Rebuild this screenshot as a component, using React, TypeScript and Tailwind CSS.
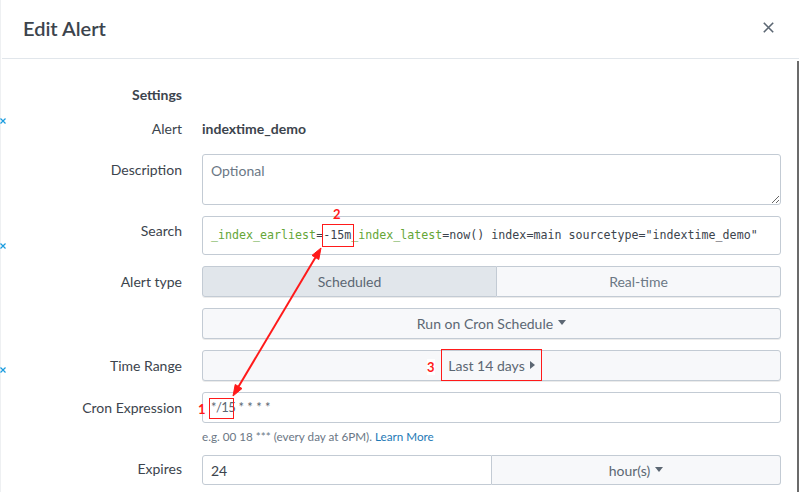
import React from "react";

function Caret() {
  return (
    <svg width="8" height="5" viewBox="0 0 8 5" className="inline-block ml-[5px] mb-[2px]">
      <path d="M0 0 L8 0 L4 5 Z" fill="#5c6773" />
    </svg>
  );
}

function CaretRight() {
  return (
    <svg width="5" height="8" viewBox="0 0 5 8" className="inline-block ml-[5px] mb-[1px]">
      <path d="M0 0 L5 4 L0 8 Z" fill="#5c6773" />
    </svg>
  );
}

function BlueX() {
  return (
    <svg width="6" height="6" viewBox="0 0 6 6">
      <path d="M0.5 0.5 L5.5 5.5 M5.5 0.5 L0.5 5.5" stroke="#1a9cdf" strokeWidth="1.2" />
    </svg>
  );
}

export default function App() {
  return (
    <div className="relative w-[799px] h-[492px] overflow-hidden bg-white flex font-[Lato,sans-serif]">
      {/* page background sliver */}
      <div className="w-[2px] h-full bg-white border-l border-[#eef0f2]" />

      {/* modal */}
      <div className="flex-1 flex flex-col">
        <div className="h-[59px] border-b border-[#e1e6eb] flex items-center justify-between pl-[21px] pr-[25px] shrink-0">
          <h1 className="text-[20px] font-semibold text-[#3c444d] leading-none -mt-[3px]">Edit Alert</h1>
          <svg width="11" height="11" viewBox="0 0 11 11" className="-mt-[3px]">
            <path d="M0.8 0.8 L10.2 10.2 M10.2 0.8 L0.8 10.2" stroke="#5c6773" strokeWidth="1.6" />
          </svg>
        </div>

        <div className="flex-1 flex min-h-0">
          <div className="flex-1 pt-[28px] pr-[16px]">
            {/* Settings */}
            <div className="flex gap-5 h-4">
              <div className="w-[180px] text-right text-[14px] leading-4 font-bold text-[#3c444d]">Settings</div>
            </div>

            {/* Alert */}
            <div className="flex gap-5 mt-[18px] h-4">
              <div className="w-[180px] text-right text-[14px] leading-4 text-[#3c444d]">Alert</div>
              <div className="text-[14px] leading-4 font-bold text-[#3c444d]">indextime_demo</div>
            </div>

            {/* Description */}
            <div className="flex gap-5 mt-[17px]">
              <div className="w-[180px] text-right text-[14px] leading-4 text-[#3c444d] pt-[8px]">Description</div>
              <textarea
                placeholder="Optional"
                className="w-[579px] h-[51px] border border-[#c3cbd4] rounded-[3px] px-[8px] py-[8px] text-[14px] leading-4 text-[#3c444d] placeholder:text-[#6b7785] outline-none"
              />
            </div>

            {/* Search */}
            <div className="flex gap-5 mt-[11px]">
              <div className="w-[180px] text-right text-[14px] leading-4 text-[#3c444d] pt-[7px]">Search</div>
              <div className="w-[579px] h-[39px] border border-[#c3cbd4] rounded-[3px] pl-[8px] flex items-center font-['DejaVu_Sans_Mono',monospace] text-[11.65px] text-[#3c444d] whitespace-nowrap">
                <span className="text-[#65a637]">_index_earliest</span>
                <span>=-15m </span>
                <span className="text-[#65a637]">_index_latest</span>
                <span>=now() index=main sourcetype="indextime_demo"</span>
              </div>
            </div>

            {/* Alert type */}
            <div className="flex gap-5 mt-[11px]">
              <div className="w-[180px] text-right text-[14px] leading-4 text-[#3c444d] pt-[8px]">Alert type</div>
              <div className="w-[579px] h-[31px] flex text-[14px] shadow-[0_1px_0_rgba(0,0,0,0.08)] rounded-[3px]">
                <div className="w-[295px] border border-[#c3cbd4] rounded-l-[3px] bg-[#e1e6eb] flex items-center justify-center text-[#5c6773]">Scheduled</div>
                <div className="flex-1 border border-l-0 border-[#c3cbd4] rounded-r-[3px] bg-[#f7f8fa] flex items-center justify-center text-[#6b7785]">Real-time</div>
              </div>
            </div>

            {/* Run on cron */}
            <div className="flex gap-5 mt-[11px]">
              <div className="w-[180px]" />
              <div className="w-[579px] h-[31px] border border-[#c3cbd4] rounded-[3px] bg-[#f7f8fa] shadow-[0_1px_0_rgba(0,0,0,0.08)] flex items-center justify-center text-[14px] text-[#5c6773]">
                Run on Cron Schedule<Caret />
              </div>
            </div>

            {/* Time range */}
            <div className="flex gap-5 mt-[11px]">
              <div className="w-[180px] text-right text-[14px] leading-4 text-[#3c444d] pt-[8px]">Time Range</div>
              <div className="w-[579px] h-[31px] border border-[#c3cbd4] rounded-[3px] bg-[#f7f8fa] shadow-[0_1px_0_rgba(0,0,0,0.08)] flex items-center justify-center text-[14px] text-[#5c6773]">
                Last 14 days<CaretRight />
              </div>
            </div>

            {/* Cron expression */}
            <div className="flex gap-5 mt-[11px]">
              <div className="w-[180px] text-right text-[14px] leading-4 text-[#3c444d] pt-[8px]">Cron Expression</div>
              <div className="w-[579px] h-[31px] border border-[#c3cbd4] rounded-[3px] flex items-center pl-[8px] text-[13px] text-[#5c6773] whitespace-pre">
                <span className="tracking-[-0.6px]">*/15</span><span> * * * *</span>
              </div>
            </div>

            {/* helper */}
            <div className="flex gap-5 mt-[6px]">
              <div className="w-[180px]" />
              <div className="text-[11.7px] leading-[14px] text-[#6b7785]">
                e.g. 00 18 *** (every day at 6PM). <span className="text-[#1e7ab6]">Learn More</span>
              </div>
            </div>

            {/* Expires */}
            <div className="flex gap-5 mt-[12px]">
              <div className="w-[180px] text-right text-[14px] leading-4 text-[#3c444d] pt-[6px]">Expires</div>
              <div className="w-[579px] h-[30px] flex text-[14px]">
                <div className="w-[290px] border border-[#c3cbd4] rounded-l-[3px] flex items-center pl-[8px] text-[#3c444d]">24</div>
                <div className="flex-1 border border-l-0 border-[#c3cbd4] rounded-r-[3px] bg-[#f7f8fa] flex items-center justify-center text-[#5c6773]">
                  hour(s)<Caret />
                </div>
              </div>
            </div>
          </div>
          {/* scrollbar */}
          <div className="w-[2px] mt-[2px] bg-[#6b6b6b]" />
        </div>
      </div>

      {/* background marks peeking at left */}
      <div className="absolute left-0 top-[118px]"><BlueX /></div>
      <div className="absolute left-0 top-[243px]"><BlueX /></div>
      <div className="absolute left-0 top-[367px]"><BlueX /></div>

      {/* annotations */}
      <div className="absolute left-[333px] top-[206px] text-[13px] font-bold text-[#ff1a1a] leading-4">2</div>
      <div className="absolute left-[322px] top-[224px] w-[32px] h-[23px] border-[1.5px] border-[#ff1a1a]" />
      <div className="absolute left-[427px] top-[359px] text-[13px] font-bold text-[#ff1a1a] leading-4 bg-white">3</div>
      <div className="absolute left-[441px] top-[349px] w-[101px] h-[32px] border-[1.5px] border-[#ff1a1a]" />
      <div className="absolute left-[198px] top-[401px] text-[13px] font-bold text-[#ff1a1a] leading-4">1</div>
      <div className="absolute left-[209px] top-[398px] w-[25px] h-[21px] border-[1.5px] border-[#ff1a1a]" />
      <svg className="absolute left-0 top-0 pointer-events-none" width="799" height="492">
        <line x1="238.6" y1="386.5" x2="315.4" y2="257.5" stroke="#ff1a1a" strokeWidth="2" />
        <path d="M321 248 L318.8 259.5 L312 255.4 Z" fill="#ff1a1a" stroke="#ff1a1a" strokeWidth="1" />
        <path d="M233 396 L242 388.5 L235.2 384.5 Z" fill="#ff1a1a" stroke="#ff1a1a" strokeWidth="1" />
      </svg>
    </div>
  );
}
